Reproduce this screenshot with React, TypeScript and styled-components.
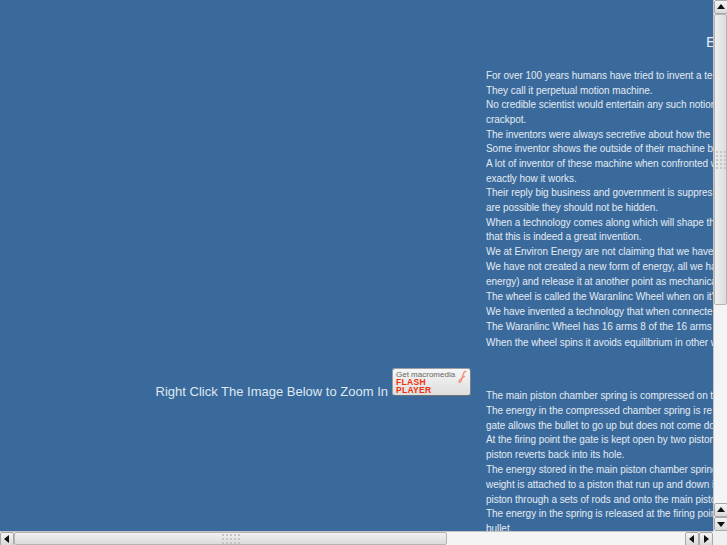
import React from 'react'
import styled, { createGlobalStyle } from 'styled-components'

const GlobalStyle = createGlobalStyle`
  html, body {
    margin: 0;
    padding: 0;
    overflow: hidden;
    background: #3a6a9c;
  }
`

const Window = styled.div`
  display: grid;
  grid-template-columns: 713px 14px;
  grid-template-rows: 531px 14px;
  width: 727px;
  height: 545px;
  overflow: hidden;
  font-family: "Liberation Sans", Arial, sans-serif;
`

const Page = styled.main`
  display: flex;
  overflow: hidden;
  background: #3a6a9c;
  color: #e3ebf3;
`

const LeftColumn = styled.section`
  flex: 0 0 486px;
  box-sizing: border-box;
  padding: 368px 15px 0 0;
  display: flex;
  justify-content: flex-end;
  align-items: flex-end;
  align-self: flex-start;
  gap: 4px;
`

const ZoomHint = styled.span`
  font-size: 13px;
  line-height: 15px;
  white-space: nowrap;
  color: #dfe7f0;
  margin-bottom: -3px;
`

const FlashBadge = styled.div`
  position: relative;
  box-sizing: border-box;
  width: 79px;
  height: 28px;
  padding: 2px 0 0 3px;
  border-radius: 3px;
  border: 1px solid #9aa0a6;
  border-right-color: #7d7f83;
  border-bottom-color: #707276;
  background: linear-gradient(#f6f6f6, #dedede);
`

const BadgeLine = styled.div`
  font-size: 8px;
  line-height: 8px;
  color: #666;
  white-space: nowrap;
`

const BadgeBrand = styled.div`
  font-size: 8.5px;
  line-height: 7.5px;
  font-weight: 700;
  letter-spacing: 0.3px;
  color: #f0300a;
`

const BadgeIcon = styled.svg`
  position: absolute;
  top: 1px;
  right: 2px;
`

const TextColumn = styled.section`
  flex: 0 0 auto;
  width: 227px;
  overflow: hidden;
`

const Title = styled.h1`
  margin: 0;
  padding: 33px 0 0 220px;
  height: 36px;
  box-sizing: content-box;
  font-size: 15px;
  line-height: 18px;
  font-weight: 400;
  white-space: nowrap;
`

const Block = styled.div<{ $gap?: number; $lead: number }>`
  margin-top: ${p => p.$gap ?? 0}px;
  line-height: ${p => p.$lead}px;
`

const Line = styled.div`
  font-size: 10px;
  letter-spacing: -0.05px;
  white-space: nowrap;
`

const VTrack = styled.div`
  display: flex;
  flex-direction: column;
  background: #f4f4f4;
  border-left: 1px solid #c4c4c4;
  box-sizing: border-box;
`

const HTrack = styled.div`
  display: flex;
  background: #f4f4f4;
  border-top: 1px solid #c4c4c4;
  box-sizing: border-box;
`

const ArrowButton = styled.button`
  flex: 0 0 14px;
  width: 14px;
  height: 14px;
  margin: 0;
  padding: 0;
  display: flex;
  align-items: center;
  justify-content: center;
  border: 1px solid #a8a8a8;
  border-radius: 2px;
  background: linear-gradient(#f4f4f4, #dadada);
`

const VThumb = styled.div`
  flex: 0 0 291px;
  display: flex;
  align-items: center;
  justify-content: center;
  box-sizing: border-box;
  border: 1px solid #b4b4b4;
  border-radius: 2px;
  background: linear-gradient(90deg, #f0f0f0, #dcdcdc);
`

const HThumb = styled.div`
  flex: 0 0 433px;
  display: flex;
  align-items: center;
  justify-content: center;
  box-sizing: border-box;
  border: 1px solid #b4b4b4;
  border-radius: 2px;
  background: linear-gradient(#f0f0f0, #dcdcdc);
`

const Grip = styled.div<{ $cols: number }>`
  display: grid;
  grid-template-columns: repeat(${p => p.$cols}, 2px);
  grid-auto-rows: 2px;
  gap: 2px;
`

const GripDot = styled.span`
  background: #c6c6c6;
`

const Spacer = styled.div`
  flex: 1;
`

const Corner = styled.div`
  background: #f0f0f0;
`

const Arrow = ({ dir }: { dir: 'up' | 'down' | 'left' | 'right' }) => {
  const points = {
    up: '4,1 8,6 0,6',
    down: '0,2 8,2 4,7',
    left: '6,0 6,8 1,4',
    right: '2,0 2,8 7,4',
  }[dir]
  return (
    <svg width="8" height="8" viewBox="0 0 8 8">
      <polygon points={points} fill="#111" />
    </svg>
  )
}

const GripDots = ({ cols, rows }: { cols: number; rows: number }) => (
  <Grip $cols={cols}>
    {Array.from({ length: cols * rows }).map((_, i) => (
      <GripDot key={i} />
    ))}
  </Grip>
)

const introLines = [
  'For over 100 years humans have tried to invent a te',
  'They call it perpetual motion machine.',
  'No credible scientist would entertain any such notion',
  'crackpot.',
  'The inventors were always secretive about how the',
  'Some inventor shows the outside of their machine b',
  'A lot of inventor of these machine when confronted w',
  'exactly how it works.',
  'Their reply big business and government is suppres',
  'are possible they should not be hidden.',
  'When a technology comes along which will shape th',
  'that this is indeed a great invention.',
  'We at Environ Energy are not claiming that we have',
]

const wheelLines = [
  'We have not created a new form of energy, all we ha',
  'energy) and release it at another point as mechanica',
  "The wheel is called the Waranlinc Wheel when on it's",
  'We have invented a technology that when connecte',
  'The Waranlinc Wheel has 16 arms 8 of the 16 arms',
  'When the wheel spins it avoids equilibrium in other w',
]

const pistonLines = [
  'The main piston chamber spring is compressed on t',
  'The energy in the compressed chamber spring is re',
  'gate allows the bullet to go up but does not come do',
  'At the firing point the gate is kept open by two piston',
  'piston reverts back into its hole.',
  'The energy stored in the main piston chamber spring',
  'weight is attached to a piston that run up and down i',
  'piston through a sets of rods and onto the main pisto',
  'The energy in the spring is released at the firing poin',
  'bullet.',
]

export default function App() {
  return (
    <Window>
      <GlobalStyle />
      <Page>
        <LeftColumn>
          <ZoomHint>Right Click The Image Below to Zoom In</ZoomHint>
          <FlashBadge>
            <BadgeLine>Get macromedia</BadgeLine>
            <BadgeBrand>FLASH</BadgeBrand>
            <BadgeBrand>PLAYER</BadgeBrand>
            <BadgeIcon width="10" height="14" viewBox="0 0 10 14">
              <path d="M8.5 1.5C6.5 1 5.5 3 5 5L3.5 10C3 12 1.5 13 1 12 .7 11 2 9.5 4 8L7 6" fill="none" stroke="#f08a78" strokeWidth="1.2" />
            </BadgeIcon>
          </FlashBadge>
        </LeftColumn>
        <TextColumn>
          <Title>E</Title>
          <Block $lead={14.65}>
            {introLines.map(line => (
              <Line key={line}>{line}</Line>
            ))}
          </Block>
          <Block $gap={-0.5} $lead={15.1}>
            {wheelLines.map(line => (
              <Line key={line}>{line}</Line>
            ))}
          </Block>
          <Block $gap={39.5} $lead={14.78}>
            {pistonLines.map(line => (
              <Line key={line}>{line}</Line>
            ))}
          </Block>
        </TextColumn>
      </Page>
      <VTrack>
        <ArrowButton><Arrow dir="up" /></ArrowButton>
        <VThumb><GripDots cols={3} rows={5} /></VThumb>
        <Spacer />
        <ArrowButton><Arrow dir="up" /></ArrowButton>
        <ArrowButton><Arrow dir="down" /></ArrowButton>
      </VTrack>
      <HTrack>
        <ArrowButton><Arrow dir="left" /></ArrowButton>
        <HThumb><GripDots cols={5} rows={3} /></HThumb>
        <Spacer />
        <ArrowButton><Arrow dir="left" /></ArrowButton>
        <ArrowButton><Arrow dir="right" /></ArrowButton>
      </HTrack>
      <Corner />
    </Window>
  )
}
